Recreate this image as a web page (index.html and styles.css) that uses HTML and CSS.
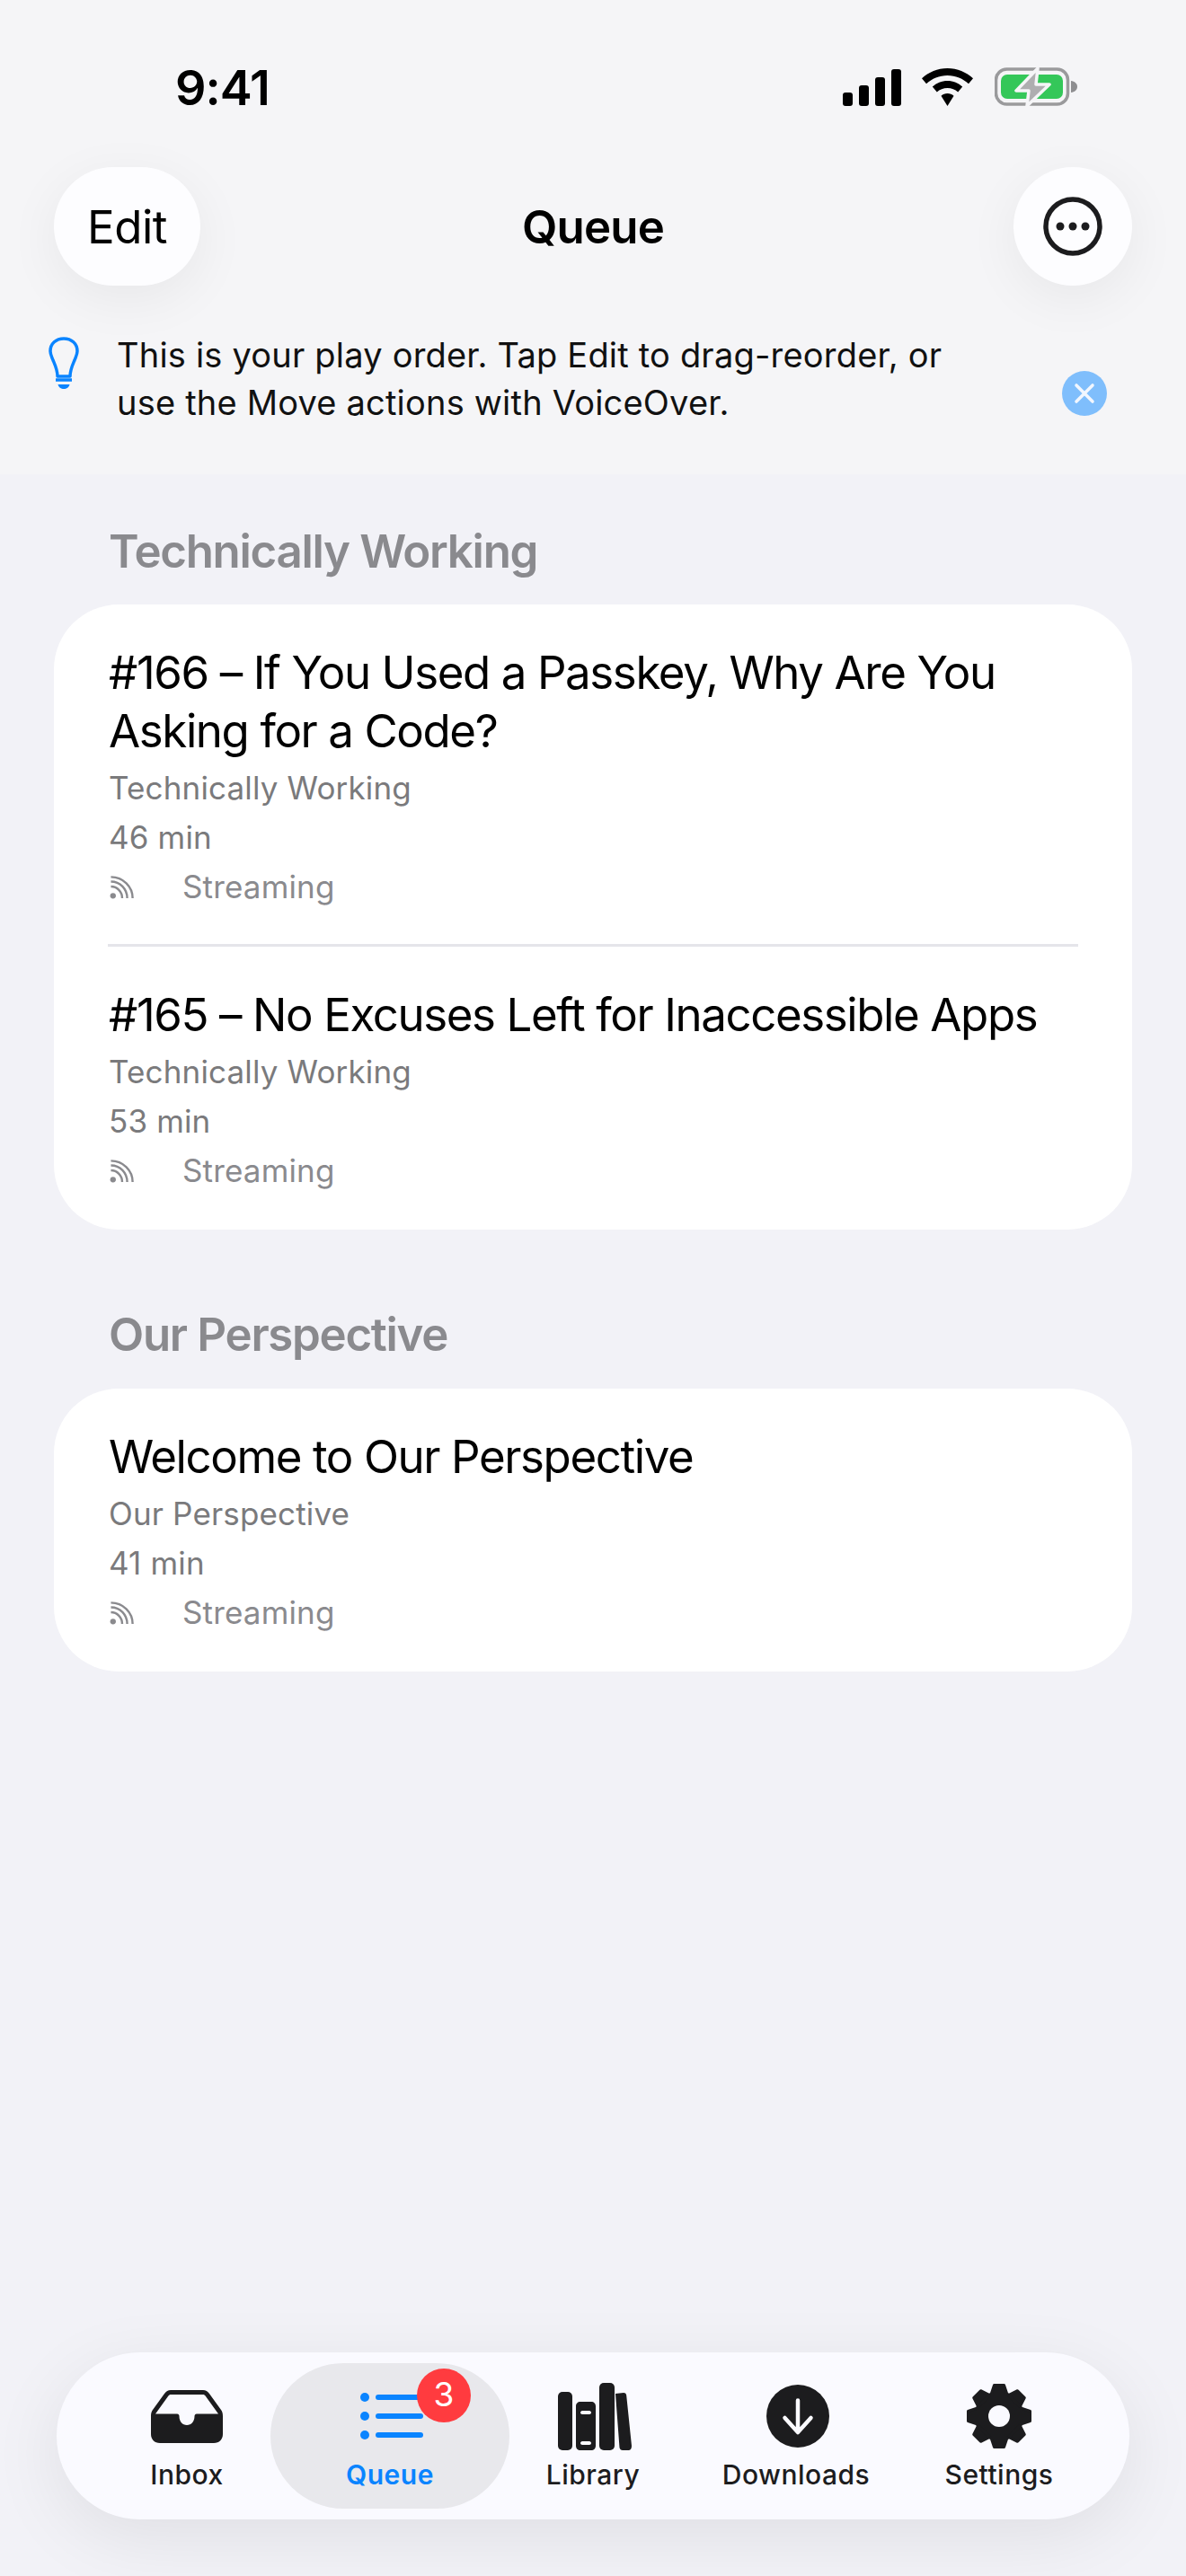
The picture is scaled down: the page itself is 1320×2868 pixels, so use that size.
FILE: index.html
```html
<!DOCTYPE html>
<html>
  <head>
    <title>Queue</title>
    <link rel="stylesheet" href="styles.css">
  </head>
  <body>
    <div class="page">
      <div class="top">
        <div class="status">
          <span class="time">9:41</span>
          <div class="status-icons">
            <svg width="65" height="41" viewBox="0 0 65 41" fill="#000">
              <rect x="0" y="26" width="11" height="15" rx="3"/>
              <rect x="18" y="18" width="11" height="23" rx="3"/>
              <rect x="36" y="9" width="11" height="32" rx="3"/>
              <rect x="54" y="0" width="11" height="41" rx="3"/>
            </svg>
            <svg class="wifi" width="57" height="42" viewBox="0 0 57 42" fill="#000">
              <path d="M28.5 0C17.5 0 7.6 4.300 0 11.300L5 17.200C11.200 11.400 19.400 7.900 28.500 7.900S45.800 11.400 52 17.200L57 11.300C49.400 4.300 39.500 0 28.500 0Z"/>
              <path d="M28.500 14C22.100 14 16.200 16.500 11.800 20.600L16.800 26.500C19.900 23.700 24 22 28.500 22S37.100 23.700 40.200 26.500L45.200 20.600C40.800 16.500 34.900 14 28.500 14Z"/>
              <path d="M28.500 28C25.800 28 23.300 29 21.500 30.800L28.500 42L35.500 30.800C33.700 29 31.200 28 28.500 28Z"/>
            </svg>
            <svg class="battery" width="92" height="44" viewBox="0 0 92 44">
              <rect x="1.500" y="2" width="80" height="39" rx="12" fill="none" stroke="#9a9a9c" stroke-width="3.500"/>
              <rect x="7" y="8" width="69" height="27" rx="7" fill="#34c759"/>
              <path d="M85 15C89 15.500 92 18 92 21.500S89 27.500 85 28Z" fill="#8e8e90"/>
              <path d="M48 1L24 26H38L36 43L61 19H46Z" fill="#aeaeb0" stroke="#f5f5f7" stroke-width="3.500" stroke-linejoin="round"/>
            </svg>
          </div>
        </div>

        <div class="nav">
          <button class="glass edit">Edit</button>
          <h1 class="nav-title">Queue</h1>
          <button class="glass more">
            <svg width="66" height="66" viewBox="0 0 66 66">
              <circle cx="33" cy="33" r="30" fill="none" stroke="#1c1c1e" stroke-width="5.500"/>
              <circle cx="19" cy="33" r="4.500" fill="#1c1c1e"/>
              <circle cx="33" cy="33" r="4.500" fill="#1c1c1e"/>
              <circle cx="47" cy="33" r="4.500" fill="#1c1c1e"/>
            </svg>
          </button>
        </div>

        <div class="tip">
          <svg class="bulb" width="34" height="58" viewBox="0 0 34 58" fill="none" stroke="#0a84ff">
            <path d="M10 44C10 37 8 33 5 26C3.500 22 2 19.500 2 16C2 7.500 8.500 2 17 2S32 7.500 32 16C32 19.500 30.500 22 29 26C26 33 24 37 24 44Z" stroke-width="3.500" stroke-linejoin="round"/>
            <path d="M8 48H26" stroke-width="3.500"/>
            <path d="M10.500 53H23.500C23 56 20 58 17 58S11 56 10.500 53Z" fill="#0a84ff" stroke="none"/>
          </svg>
          <p class="tip-text">This is your play order. Tap Edit to drag-reorder, or use the Move actions with VoiceOver.</p>
          <button class="tip-close">
            <svg width="24" height="24" viewBox="0 0 24 24" fill="none" stroke="#f2f7fe" stroke-width="3.600" stroke-linecap="round">
              <path d="M3 3L21 21M21 3L3 21"/>
            </svg>
          </button>
        </div>
      </div>

      <div class="list">
        <h2 class="section-title">Technically Working</h2>
        <div class="card">
          <div class="episode">
            <div class="episode-title">#166 – If You Used a Passkey, Why Are You Asking for a Code?</div>
            <div class="meta">Technically Working</div>
            <div class="meta">46 min</div>
            <div class="meta source">
              <svg class="rss" width="28" height="26" viewBox="0 0 30 28" fill="none" stroke="#8a8a8e" stroke-width="2.600">
                <circle cx="4" cy="24" r="3.400" fill="#8a8a8e" stroke="none"/>
                <path d="M1.500 13C9 13 15 19 15 27"/>
                <path d="M1.500 7C12.500 7 21 16 21 27"/>
                <path d="M1.500 1.500C16 1.500 27.500 13 27.500 27"/>
              </svg>
              <span>Streaming</span>
            </div>
          </div>
          <div class="episode">
            <div class="episode-title">#165 – No Excuses Left for Inaccessible Apps</div>
            <div class="meta">Technically Working</div>
            <div class="meta">53 min</div>
            <div class="meta source">
              <svg class="rss" width="28" height="26" viewBox="0 0 30 28" fill="none" stroke="#8a8a8e" stroke-width="2.600">
                <circle cx="4" cy="24" r="3.400" fill="#8a8a8e" stroke="none"/>
                <path d="M1.500 13C9 13 15 19 15 27"/>
                <path d="M1.500 7C12.500 7 21 16 21 27"/>
                <path d="M1.500 1.500C16 1.500 27.500 13 27.500 27"/>
              </svg>
              <span>Streaming</span>
            </div>
          </div>
        </div>

        <h2 class="section-title second">Our Perspective</h2>
        <div class="card">
          <div class="episode">
            <div class="episode-title">Welcome to Our Perspective</div>
            <div class="meta">Our Perspective</div>
            <div class="meta">41 min</div>
            <div class="meta source">
              <svg class="rss" width="28" height="26" viewBox="0 0 30 28" fill="none" stroke="#8a8a8e" stroke-width="2.600">
                <circle cx="4" cy="24" r="3.400" fill="#8a8a8e" stroke="none"/>
                <path d="M1.500 13C9 13 15 19 15 27"/>
                <path d="M1.500 7C12.500 7 21 16 21 27"/>
                <path d="M1.500 1.500C16 1.500 27.500 13 27.500 27"/>
              </svg>
              <span>Streaming</span>
            </div>
          </div>
        </div>
      </div>

      <nav class="tabbar">
        <div class="tab">
          <div class="tab-icon">
            <svg width="80" height="59" viewBox="0 0 80 59">
              <path fill-rule="evenodd" fill="#1c1c1e" d="M22 0H58C61 0 63 1.500 65 4L78 22C79.500 24 80 26 80 29V49C80 55 76 59 70 59H10C4 59 0 55 0 49V29C0 26 .5 24 2 22L15 4C17 1.500 19 0 22 0ZM22 5C21 5 20 5.500 19 7L5 26.500H29C31 26.500 31.500 28 31.500 29C31.500 35 35 39 40 39S48.500 35 48.500 29C48.500 28 49 26.500 51 26.500H75L61 7C60 5.500 59 5 58 5Z"/>
            </svg>
          </div>
          <span class="tab-label">Inbox</span>
        </div>
        <div class="tab active">
          <div class="tab-icon">
            <svg class="nudge" width="70" height="52" viewBox="0 0 70 52" fill="#0a84ff">
              <circle cx="5" cy="5" r="5"/>
              <circle cx="5" cy="26" r="5"/>
              <circle cx="5" cy="47" r="5"/>
              <rect x="17" y="2" width="53" height="6" rx="3"/>
              <rect x="17" y="23" width="53" height="6" rx="3"/>
              <rect x="17" y="44" width="53" height="6" rx="3"/>
            </svg>
          </div>
          <span class="tab-label">Queue</span>
          <span class="badge">3</span>
        </div>
        <div class="tab">
          <div class="tab-icon">
            <svg class="nudge" width="82" height="75" viewBox="0 0 82 75" fill="#1c1c1e">
              <rect x="0" y="10" width="16" height="65" rx="5"/>
              <path fill-rule="evenodd" d="M25 21H37C40 21 42 23 42 26V70C42 73 40 75 37 75H25C22 75 20 73 20 70V26C20 23 22 21 25 21ZM27 31C26 31 25 32 25 33S26 35 27 35H35C36 35 37 34 37 33S36 31 35 31ZM27 65C26 65 25 66 25 67S26 69 27 69H35C36 69 37 68 37 67S36 65 35 65Z"/>
              <rect x="46" y="0" width="17" height="75" rx="5"/>
              <path d="M64 12L73 11C75 11 76 12 76.200 14L82 70C82 73 81 74.500 79 75L72 75C70 75 69 74 68.500 72Z"/>
            </svg>
          </div>
          <span class="tab-label">Library</span>
        </div>
        <div class="tab">
          <div class="tab-icon">
            <svg class="nudge" width="70" height="70" viewBox="0 0 70 70">
              <circle cx="35" cy="35" r="35" fill="#1c1c1e"/>
              <path d="M35 17.500V52.500M20.500 37L35 53L49.500 37" fill="none" stroke="#fafaff" stroke-width="4.500" stroke-linecap="round" stroke-linejoin="round"/>
            </svg>
          </div>
          <span class="tab-label">Downloads</span>
        </div>
        <div class="tab">
          <div class="tab-icon">
            <svg width="72" height="72" viewBox="-36 -36 72 72" fill="#1c1c1e" stroke="#1c1c1e" stroke-width="3" stroke-linejoin="round">
              <circle r="26"/>
              <path d="M-9 -24L-5.500 -34.500H5.500L9 -24Z"/>
              <path d="M-9 -24L-5.500 -34.500H5.500L9 -24Z" transform="rotate(45)"/>
              <path d="M-9 -24L-5.500 -34.500H5.500L9 -24Z" transform="rotate(90)"/>
              <path d="M-9 -24L-5.500 -34.500H5.500L9 -24Z" transform="rotate(135)"/>
              <path d="M-9 -24L-5.500 -34.500H5.500L9 -24Z" transform="rotate(180)"/>
              <path d="M-9 -24L-5.500 -34.500H5.500L9 -24Z" transform="rotate(225)"/>
              <path d="M-9 -24L-5.500 -34.500H5.500L9 -24Z" transform="rotate(270)"/>
              <path d="M-9 -24L-5.500 -34.500H5.500L9 -24Z" transform="rotate(315)"/>
              <circle r="12" fill="#fafaff" stroke="none"/>
            </svg>
          </div>
          <span class="tab-label">Settings</span>
        </div>
      </nav>
    </div>
  </body>
</html>
```

FILE: styles.css
```css
* {
  box-sizing: border-box;
}

body {
  margin: 0;
  background-color: #f2f2f7;
  font-family: "Inter", "Liberation Sans", sans-serif;
  color: #000;
}

h1,
h2,
p {
  margin: 0;
}

button {
  border: none;
  padding: 0;
  font-family: inherit;
  color: inherit;
}

.page {
  display: flex;
  flex-direction: column;
  height: 2868px;
  overflow: hidden;
}

.top {
  height: 528px;
  background-color: #f5f5f7;
}

.status {
  display: flex;
  justify-content: space-between;
  align-items: center;
  height: 186px;
  padding: 8px 121px 0 195px;
}

.time {
  font-size: 54px;
  font-weight: 600;
  letter-spacing: -1px;
}

.status-icons {
  display: flex;
  align-items: center;
}

.wifi {
  margin-left: 23px;
}

.battery {
  margin-left: 24px;
}

.nav {
  display: grid;
  grid-template-columns: 1fr auto 1fr;
  align-items: center;
  height: 132px;
  padding: 0 60px;
}

.glass {
  height: 132px;
  border-radius: 66px;
  background-color: #fdfdff;
  box-shadow: 0 14px 60px rgba(0, 0, 0, 0.06);
}

.edit {
  width: 163px;
  font-size: 51px;
  letter-spacing: -0.5px;
}

.more {
  display: flex;
  align-items: center;
  justify-content: center;
  justify-self: end;
  width: 132px;
}

.nav-title {
  font-size: 51px;
  font-weight: 600;
  letter-spacing: -0.8px;
}

.tip {
  display: flex;
  align-items: flex-start;
  padding: 57px 88px 0 54px;
}

.bulb {
  flex-shrink: 0;
}

.tip-text {
  flex: 1;
  margin-left: 42px;
  margin-top: -6px;
  padding-right: 100px;
  font-size: 38px;
  line-height: 53px;
  letter-spacing: 0.2px;
  color: #111;
}

.tip-close {
  display: flex;
  align-items: center;
  justify-content: center;
  flex-shrink: 0;
  width: 50px;
  height: 50px;
  margin-top: 38px;
  border-radius: 50%;
  background-color: #7fbefc;
}

.list {
  padding: 0 60px;
}

.section-title {
  height: 145px;
  padding: 56px 0 0 61px;
  font-size: 51px;
  font-weight: 600;
  line-height: 60px;
  color: #8a8a8e;
  letter-spacing: -1.3px;
}

.section-title.second {
  height: 177px;
  padding-top: 87px;
}

.card {
  padding: 0 60px;
  border-radius: 72px;
  background-color: #fff;
}

.episode {
  padding: 43px 0 38px 1px;
}

.episode:not(:last-child) {
  padding-bottom: 36px;
}

.episode + .episode {
  border-top: 3px solid #e5e5ea;
  padding-top: 43px;
}

.episode-title {
  font-size: 51px;
  line-height: 65px;
  letter-spacing: -1.4px;
  margin-bottom: 4px;
}

.meta {
  font-size: 35px;
  line-height: 55px;
  letter-spacing: 0.15px;
  color: #7a7a7c;
}

.source {
  display: flex;
  align-items: center;
  color: #8a8a8e;
}

.rss {
  margin-left: 1px;
  margin-right: 53px;
}

.tabbar {
  display: flex;
  margin: auto 63px 63px;
  height: 186px;
  padding: 12px 32px;
  border-radius: 93px;
  background-color: #fafaff;
  box-shadow: 0 20px 80px rgba(0, 0, 0, 0.08);
}

.tab {
  position: relative;
  flex: none;
  display: flex;
  flex-direction: column;
  align-items: center;
  width: 226px;
  padding-top: 21px;
  border-radius: 81px;
}

.tab-icon {
  display: flex;
  align-items: center;
  justify-content: center;
  height: 76px;
  margin-bottom: 8px;
}

.tab-label {
  font-size: 30px;
  font-weight: 500;
  line-height: 38px;
  letter-spacing: 0.5px;
  color: #1c1c1e;
}

.tab.active {
  width: 266px;
  margin: 0 -20px;
  background-color: #e8e8ec;
}

.tab.active .tab-label {
  color: #0a84ff;
  font-weight: 600;
}

.nudge {
  margin-left: 3px;
}

.badge {
  position: absolute;
  top: 6px;
  right: 43px;
  width: 60px;
  height: 60px;
  border-radius: 50%;
  background-color: #ff3b3f;
  color: #fff;
  font-size: 37px;
  line-height: 58px;
  text-align: center;
}
```
